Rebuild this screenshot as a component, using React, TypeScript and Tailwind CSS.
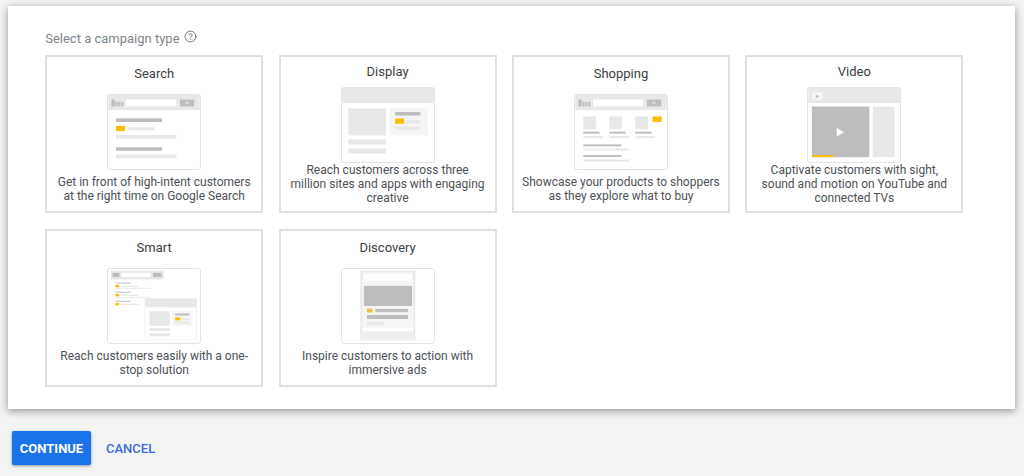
import { CircleHelp } from "lucide-react";

const LIGHT = "#e8e8e8";
const PALE = "#f5f5f5";
const DARK = "#bdbdbd";
const YELLOW = "#fbbc04";

type Bar = [number, number, number, number, string];

// browser-like top strip shared by the search/shopping drawings
const searchHeader: Bar[] = [
  [0, 0, 94, 15.5, LIGHT],
  [3.3, 4.7, 3.4, 7, DARK],
  [7.5, 7, 2, 4.7, DARK],
  [10.5, 7, 2, 4.7, DARK],
  [13.5, 7, 2, 4.7, DARK],
  [18.3, 4.7, 51.7, 7, "#ffffff"],
  [73.7, 4.7, 14.6, 7, DARK],
  [79.5, 6.7, 3, 3, "#d8d8d8"],
];

const drawings: Record<string, Bar[]> = {
  Search: [
    ...searchHeader,
    [8, 24, 47.3, 3.7, DARK],
    [8, 31.7, 9.3, 5.3, YELLOW],
    [20.7, 33, 26.6, 3.3, LIGHT],
    [8, 41, 62, 3.7, LIGHT],
    [8, 53.7, 47.3, 3.6, DARK],
    [8, 61, 62, 4, LIGHT],
  ],
  Display: [
    [0, 0, 94, 15.5, LIGHT],
    [6.3, 21, 38.7, 27.7, LIGHT],
    [6.3, 52.7, 38.7, 5.3, LIGHT],
    [6.3, 62, 38.7, 5.3, LIGHT],
    [48.7, 21, 39, 27.7, PALE],
    [54.3, 24.7, 26, 3.6, DARK],
    [54.3, 31.3, 9.4, 5.4, YELLOW],
    [65.3, 33, 15, 3.7, LIGHT],
    [54.3, 39.7, 26, 3.6, LIGHT],
  ],
  Shopping: [
    ...searchHeader,
    [8.3, 22, 13, 13, LIGHT],
    [35, 22, 13, 13, LIGHT],
    [61.7, 22, 13, 13, LIGHT],
    [79.3, 22, 9.4, 5.7, YELLOW],
    [8.3, 37.7, 16.7, 2, DARK],
    [35, 37.7, 16.7, 2, DARK],
    [61.7, 37.7, 16.7, 2, DARK],
    [8.3, 42.3, 20.4, 2, LIGHT],
    [35, 42.3, 20.4, 2, LIGHT],
    [61.7, 42.3, 20.4, 2, LIGHT],
    [8.3, 50.7, 39, 2, DARK],
    [8.3, 55, 47, 2, LIGHT],
    [8.3, 61.7, 39, 2, DARK],
    [8.3, 66.3, 47, 2, LIGHT],
  ],
  Video: [
    [0, 0, 94, 15.5, LIGHT],
    [3.7, 19, 59, 52, DARK],
    [66.3, 19, 22.4, 52, LIGHT],
    [3.7, 69, 22.3, 2, YELLOW],
  ],
  Smart: [
    [2.7, 1.7, 54.6, 9, LIGHT],
    [4.5, 4, 7, 4.3, DARK],
    [13.3, 4, 30.4, 4.3, "#ffffff"],
    [46, 4, 8.7, 4.3, DARK],
    [7.3, 14, 15.7, 1, DARK],
    [7.3, 16.3, 4, 2.4, YELLOW],
    [13.3, 17, 18, 1.3, LIGHT],
    [7.3, 19.3, 36.4, 1, LIGHT],
    [7.3, 23.3, 15.7, 1, DARK],
    [7.3, 25.6, 4, 2.4, YELLOW],
    [13.3, 26.3, 18, 1.3, LIGHT],
    [7.3, 28.6, 36.4, 1, LIGHT],
    [7.3, 32.6, 15.7, 1, DARK],
    [7.3, 35, 4, 2.4, YELLOW],
    [13.3, 35.7, 18, 1.3, LIGHT],
    [37.4, 30.3, 53.3, 41.9, LIGHT],
    [38, 30.3, 52.2, 41.4, "#ffffff"],
    [38, 30.3, 52.7, 9, LIGHT],
    [42.3, 43.3, 21, 15, LIGHT],
    [42.3, 60.7, 21, 3, LIGHT],
    [42.3, 66, 21, 3, LIGHT],
    [65.7, 43.3, 20.6, 15, PALE],
    [68.7, 45.7, 14.6, 2, DARK],
    [68.7, 49.7, 5.3, 3, YELLOW],
    [75.7, 50.3, 7.6, 2, LIGHT],
    [68.7, 54, 14.6, 2, LIGHT],
  ],
  Discovery: [
    [18.7, 1.7, 56.3, 71.6, LIGHT],
    [20.5, 3, 52.7, 69.3, PALE],
    [22, 5.3, 49.7, 6.4, "#ffffff"],
    [22.3, 17.3, 49.4, 20.7, DARK],
    [25.3, 40.7, 5.7, 4, "#e8c04a"],
    [34, 41, 33.7, 3.3, DARK],
    [25.3, 47.3, 42.4, 4, DARK],
    [25.3, 54, 17.7, 3.7, LIGHT],
    [20.5, 60.5, 52.7, 3, "#ffffff"],
    [22, 64.7, 49.7, 7, "#efefef"],
  ],
};

const Drawing = ({ name }: { name: string }) => (
  <svg viewBox="0 0 94 76" className="h-[76px] w-[94px] shrink-0 rounded-[3px] border border-[#e4e4e4] bg-white">
    {drawings[name].map(([x, y, w, h, fill], i) => (
      <rect key={i} x={x} y={y} width={w} height={h} fill={fill} />
    ))}
    {name === "Video" && (
      <>
        <rect x="4" y="4.7" width="10.7" height="8" rx="1.5" fill={PALE} />
        <polygon points="7.8,6.8 11.2,8.7 7.8,10.6" fill={DARK} />
        <polygon points="29.3,41 36.7,45.4 29.3,49.7" fill="#ffffff" />
      </>
    )}
  </svg>
);

interface CampaignCardProps {
  name: string;
  description: string[];
}

const CampaignCard = ({ name, description }: CampaignCardProps) => {
  // cards with a three line description squeeze the spacing
  const tall = description.length > 2;
  return (
    <div className="flex h-[158px] flex-col items-center border-2 border-[#e0e0e0] bg-white">
      <h3 className={`text-[13px] leading-5 text-[#3c4043] ${tall ? "mt-[5px]" : "mt-[7px]"}`}>{name}</h3>
      <div className={tall ? "mt-[5px]" : "mt-2.5"}>
        <Drawing name={name} />
      </div>
      <p className={`text-center text-xs leading-[14px] text-[#4d5156] ${tall ? "mt-0" : "mt-[5px]"}`}>
        {description.map((line) => (
          <span key={line} className="block whitespace-nowrap">
            {line}
          </span>
        ))}
      </p>
    </div>
  );
};

const campaigns: CampaignCardProps[] = [
  { name: "Search", description: ["Get in front of high-intent customers", "at the right time on Google Search"] },
  { name: "Display", description: ["Reach customers across three", "million sites and apps with engaging", "creative"] },
  { name: "Shopping", description: ["Showcase your products to shoppers", "as they explore what to buy"] },
  { name: "Video", description: ["Captivate customers with sight,", "sound and motion on YouTube and", "connected TVs"] },
  { name: "Smart", description: ["Reach customers easily with a one-", "stop solution"] },
  { name: "Discovery", description: ["Inspire customers to action with", "immersive ads"] },
];

export default function App() {
  return (
    <div className="h-[476px] overflow-hidden bg-[#f1f3f4] pt-1.5 font-['Roboto',sans-serif]">
      <div className="ml-2 h-[403px] w-[1007px] bg-white pl-[37.2px] pt-6 shadow-[0_2px_8px_rgba(0,0,0,0.4)]">
        <div className="flex h-[25px] items-start gap-1">
          <span className="text-[13px] leading-[18px] text-[#80868b]">Select a campaign type</span>
          <CircleHelp className="h-[13px] w-[13px] text-[#5f6368]" strokeWidth={1.6} />
        </div>
        <div className="grid w-[918.2px] grid-cols-4 gap-x-[15.4px] gap-y-4">
          {campaigns.map((c) => (
            <CampaignCard key={c.name} {...c} />
          ))}
        </div>
      </div>
      <div className="ml-3 mt-[22px] flex items-center gap-[15px]">
        <button className="h-[34px] w-[79px] rounded-[2px] bg-[#1a73e8] pt-0.5 text-[13px] font-bold text-white shadow-[0_1px_3px_rgba(0,0,0,0.4)]">
          CONTINUE
        </button>
        <button className="pt-0.5 text-[13px] font-medium text-[#3f6ad8]">CANCEL</button>
      </div>
    </div>
  );
}
